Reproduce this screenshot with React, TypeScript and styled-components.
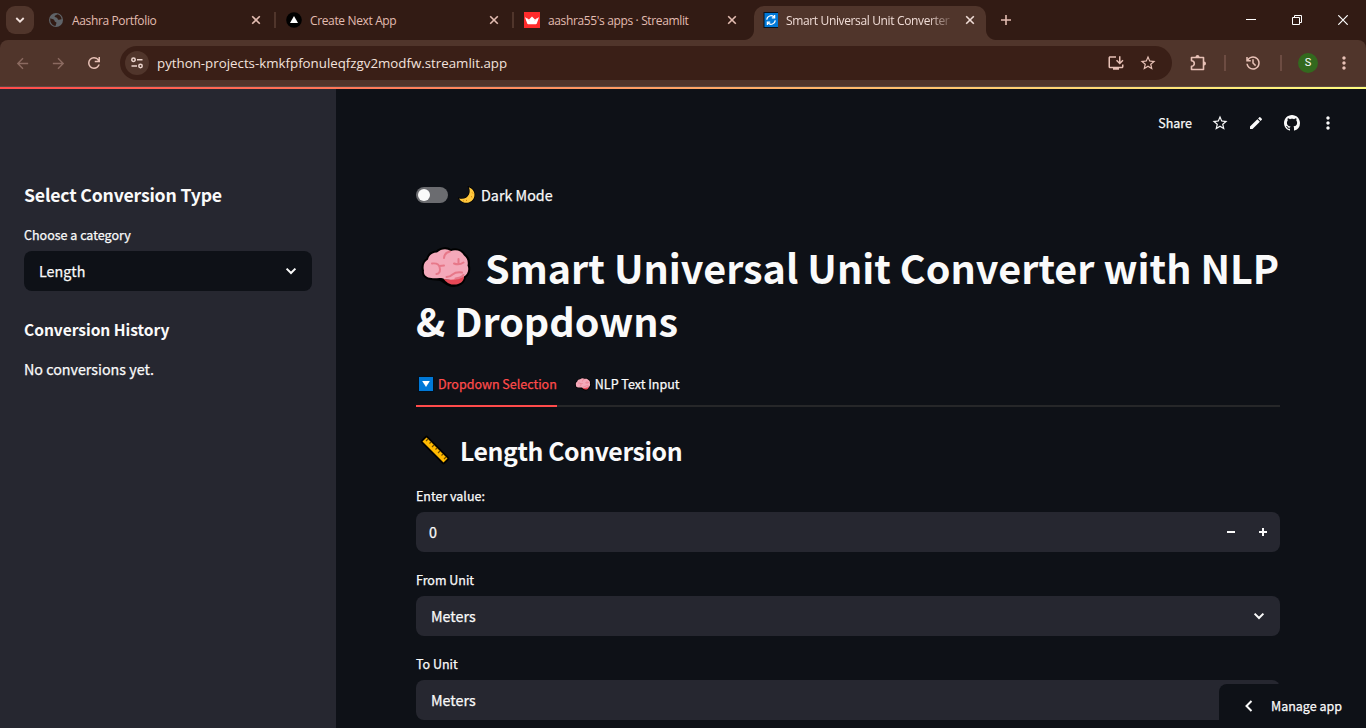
import React from "react";
import styled, { createGlobalStyle } from "styled-components";
import {
  MdArrowBack,
  MdArrowForward,
  MdStarOutline,
  MdEdit,
  MdMoreVert,
  MdOutlineInstallDesktop,
} from "react-icons/md";

const sans = `"Noto Sans CJK SC", "Noto Sans", sans-serif`;
const chromeFont = `"Open Sans", "Noto Sans", sans-serif`;

const GlobalStyle = createGlobalStyle`
  * { box-sizing: border-box; }
  html, body { margin: 0; padding: 0; background: #0e1117; overflow: hidden; }
  svg { display: block; flex: none; }
  h1, h2, h3, p { margin: 0; }
`;

const Window = styled.div`
  position: relative;
  width: 1366px;
  height: 728px;
  display: flex;
  flex-direction: column;
  overflow: hidden;
  background: #0e1117;
  white-space: nowrap;
`;

/* ---------- browser chrome ---------- */

const TabStrip = styled.div`
  height: 40px;
  flex: none;
  display: flex;
  align-items: center;
  background: #321b14;
  font-family: ${chromeFont};
`;

const TabSearch = styled.div`
  width: 28px;
  height: 28px;
  margin: 0 6px;
  border-radius: 9px;
  background: #50352b;
  display: flex;
  align-items: center;
  justify-content: center;
`;

const BrowserTab = styled.div<{ $active?: boolean }>`
  position: relative;
  width: 232px;
  height: 34px;
  margin-top: 6px;
  padding: 0 11px 6px 8px;
  display: flex;
  align-items: center;
  border-radius: 10px 10px 0 0;
  background: ${(p) => (p.$active ? "#50352b" : "transparent")};
  color: ${(p) => (p.$active ? "#f0dcd6" : "#e3bcb1")};
  ${(p) =>
    p.$active &&
    `
    &::before, &::after {
      content: "";
      position: absolute;
      bottom: 0;
      width: 10px;
      height: 10px;
    }
    &::before { left: -10px; background: radial-gradient(circle at 0 0, transparent 9.5px, #50352b 10.5px); }
    &::after { right: -10px; background: radial-gradient(circle at 100% 0, transparent 9.5px, #50352b 10.5px); }
  `}
`;

const TabTitle = styled.span<{ $fade?: boolean }>`
  width: 172px;
  margin-left: 8px;
  margin-right: auto;
  padding-top: 2px;
  font-size: 12px;
  line-height: 20px;
  letter-spacing: -0.36px;
  ${(p) => p.$fade && `mask-image: linear-gradient(90deg, #000 142px, transparent 170px);`}
`;

const TabDivider = styled.div<{ $hidden?: boolean }>`
  width: 2px;
  height: 16px;
  margin: 0 2px;
  background: ${(p) => (p.$hidden ? "transparent" : "#50352b")};
`;

const NewTab = styled.div`
  width: 40px;
  display: flex;
  justify-content: center;
`;

const WindowButtons = styled.div`
  margin-left: auto;
  display: flex;
`;

const WindowButton = styled.div`
  width: 46px;
  height: 40px;
  display: flex;
  align-items: center;
  justify-content: center;
`;

const ToolbarBack = styled.div`
  flex: none;
  background: #321b14;
`;

const Toolbar = styled.div`
  height: 47px;
  display: flex;
  align-items: center;
  padding-left: 4px;
  background: #50352b;
  border-radius: 8px 8px 0 0;
  border-bottom: 1px solid #5a4842;
  color: #e3bcb1;
`;

const NavButton = styled.div<{ $dim?: boolean; $width?: number }>`
  width: ${(p) => p.$width ?? 36}px;
  flex: none;
  display: flex;
  justify-content: center;
  color: ${(p) => (p.$dim ? "#8b6a60" : "#e8c1b6")};
`;

const AddressBar = styled.div`
  width: 1052px;
  flex: none;
  height: 34px;
  margin-left: 8px;
  padding: 0 8px 0 5px;
  display: flex;
  align-items: center;
  border-radius: 17px;
  background: #3a1f17;
`;

const SiteInfo = styled.div`
  width: 24px;
  height: 24px;
  border-radius: 50%;
  background: #50352b;
  display: flex;
  align-items: center;
  justify-content: center;
`;

const Url = styled.span`
  margin-left: 8px;
  margin-right: auto;
  font-family: ${chromeFont};
  font-size: 13.3px;
  line-height: 20px;
  color: #f3e2dd;
`;

const ToolbarDivider = styled.div`
  width: 2px;
  height: 16px;
  background: #6d4c42;
`;

const Avatar = styled.div`
  width: 20px;
  height: 20px;
  border-radius: 50%;
  background: #33691e;
  color: #fff;
  font: 11px/20px Roboto, sans-serif;
  text-align: center;
`;

/* ---------- page ---------- */

const Decoration = styled.div`
  height: 2px;
  flex: none;
  background: linear-gradient(90deg, #ff4b4b, #fffd80);
`;

const Page = styled.div`
  flex: 1;
  min-height: 0;
  display: flex;
  font-family: ${sans};
  color: #fafafa;
`;

const Sidebar = styled.aside`
  width: 336px;
  padding: 93px 24px 0;
  background: #262730;
`;

const Text = styled.div<{ $size: number; $line: number; $weight?: number; $spacing?: number }>`
  font-size: ${(p) => p.$size}px;
  line-height: ${(p) => p.$line}px;
  font-weight: ${(p) => p.$weight ?? 400};
  letter-spacing: ${(p) => p.$spacing ?? 0}px;
  -webkit-text-stroke: ${(p) => (p.$weight ? 0 : 0.25)}px currentColor;
`;

const SelectBox = styled.div<{ $dark?: boolean }>`
  height: 40px;
  padding: 0 15px;
  display: flex;
  align-items: center;
  justify-content: space-between;
  border-radius: 8px;
  background: ${(p) => (p.$dark ? "#0e1117" : "#262730")};
`;

const Field = styled.div`
  display: flex;
  flex-direction: column;
  gap: 4px;
  margin-bottom: 16px;
`;

const SidebarField = styled(Field)`
  margin-top: 17px;
  margin-bottom: 26px;
`;

const HistoryNote = styled(Text)`
  padding-top: 16px;
`;

const Main = styled.main`
  flex: 1;
  display: flex;
  flex-direction: column;
`;

const ActionBar = styled.div`
  height: 68px;
  flex: none;
  padding-right: 20px;
  display: flex;
  align-items: center;
  justify-content: flex-end;
`;

const Action = styled.div`
  width: 36px;
  display: flex;
  justify-content: center;
`;

const Share = styled(Text)`
  margin-right: 10px;
`;

const Content = styled.div`
  width: 864px;
  margin-left: 80px;
  padding-top: 26px;
`;

const ToggleRow = styled.div`
  height: 24px;
  display: flex;
  align-items: center;
`;

const Track = styled.div`
  width: 32px;
  height: 16px;
  margin-right: 9px;
  padding: 2px;
  border-radius: 8px;
  background: #6b6c70;
`;

const Knob = styled.div`
  width: 12px;
  height: 12px;
  border-radius: 50%;
  background: #fafafa;
`;

const Title = styled.h1`
  margin-top: 33px;
  font-size: 39.5px;
  line-height: 53px;
  font-weight: 700;
`;

const TitleLine = styled.div`
  display: flex;
  align-items: center;
  height: 53px;
`;

const TabList = styled.div`
  height: 40px;
  margin-top: 21px;
  display: flex;
  gap: 16px;
  border-bottom: 2px solid #262729;
`;

const ContentTab = styled.div<{ $active?: boolean }>`
  height: 40px;
  padding-bottom: 4px;
  display: flex;
  align-items: center;
  color: ${(p) => (p.$active ? "#ff4b4b" : "#fafafa")};
  border-bottom: 2px solid ${(p) => (p.$active ? "#ff4b4b" : "transparent")};
`;

const SectionHeading = styled.h2`
  height: 34px;
  margin: 26px 0 17px;
  display: flex;
  align-items: center;
`;

const Stepper = styled.div`
  display: flex;
`;

const StepButton = styled.div`
  width: 32px;
  display: flex;
  justify-content: center;
`;

const NumberBox = styled(SelectBox)`
  padding: 0 1px 0 13px;
`;

const ManageApp = styled.div`
  position: absolute;
  right: 0;
  bottom: 0;
  width: 147px;
  height: 44px;
  padding-left: 24px;
  padding-bottom: 1px;
  display: flex;
  align-items: center;
  border-top-left-radius: 8px;
  background: #0e1117;
  color: #fafafa;
  font-family: ${sans};
`;

const IconGap = styled.span<{ $l?: number; $r?: number }>`
  display: block;
  flex: none;
  margin-left: ${(p) => p.$l ?? 0}px;
  margin-right: ${(p) => p.$r ?? 0}px;
`;

/* ---------- drawings ---------- */

const CloseIcon = () => (
  <svg width="10" height="10" viewBox="0 0 10 10" stroke="currentColor" strokeWidth="1.6" fill="none">
    <path d="M1.2 1.2 8.8 8.8M8.8 1.2 1.2 8.8" />
  </svg>
);

const Chevron = () => (
  <svg width="12" height="12" viewBox="0 0 12 12" fill="none" stroke="#fafafa" strokeWidth="2">
    <path d="M1.6 3.6 6 8l4.4-4.4" />
  </svg>
);

const ReloadIcon = () => (
  <svg width="18" height="18" viewBox="0 -960 960 960" fill="currentColor">
    <path d="M480-160q-134 0-227-93t-93-227q0-134 93-227t227-93q69 0 132 28.500T720-690v-110h80v280H520v-80h168q-32-56-87.500-88T480-720q-100 0-170 70t-70 170q0 100 70 170t170 70q77 0 139-44t87-116h84q-28 106-114 173t-196 67Z" />
  </svg>
);

const HistoryIcon = () => (
  <svg width="18" height="18" viewBox="0 -960 960 960" fill="currentColor">
    <path d="M480-120q-138 0-240.500-91.500T122-440h82q14 104 92.500 172T480-200q117 0 198.500-81.500T760-480q0-117-81.500-198.500T480-760q-69 0-129 32t-101 88h110v80H120v-240h80v94q51-64 124.500-99T480-840q75 0 140.500 28.500t114 77q48.500 48.500 77 114T840-480q0 75-28.500 140.500t-77 114q-48.500 48.500-114 77T480-120Zm112-192L440-464v-216h80v184l128 128-56 56Z" />
  </svg>
);

const PuzzleIcon = () => (
  <svg width="18" height="18" viewBox="0 0 18 18" fill="none" stroke="currentColor" strokeWidth="1.600" strokeLinejoin="round">
    <path d="M2.500 3.500h12v12h-12v-3.200a2.800 2.800 0 0 0 0-5.600Z" />
    <path d="M6.500 3a2 2 0 0 1 4 0ZM15 7.500a2 2 0 0 1 0 4Z" fill="currentColor" stroke="none" />
  </svg>
);

const GlobeIcon = () => (
  <svg width="16" height="16" viewBox="0 0 16 16">
    <circle cx="8" cy="8" r="7" fill="#5f6368" />
    <path
      d="M2.400 6.300c1.600 1 2.600.4 3.600 1.500.9 1 .2 1.800 1.500 2.200 1 .3 1.300 1 .6 1.900l-.6 2.100C4.400 13.800 1.500 10.500 2.400 6.300ZM9 2.200c-.3 1.200-2.400 1-2.400 2.300 0 1.100 1.700.7 2.500 1.400.7.700.6 1.800 1.700 1.900 1.200.1 1.700-.6 2.700-.4.300-2.400-2-5.100-4.500-5.200Z"
      fill="#321b14"
    />
  </svg>
);

const NextIcon = () => (
  <svg width="16" height="16" viewBox="0 0 16 16">
    <circle cx="8" cy="8" r="7.800" fill="#000" />
    <path d="M8 4 12 11H4Z" fill="#fff" />
  </svg>
);

const CrownIcon = () => (
  <svg width="16" height="16" viewBox="0 0 16 16">
    <path d="M0 0h16v16H0Z" fill="#ff2b2b" />
    <path d="M1 5.300 5 7.400 8 4.600l3 2.800 4-2.100-2.200 6.200q-.3.700-1 .7H4.200q-.7 0-1-.7Z" fill="#fff" />
    <path d="M1 5.300 5 7.400 6.300 9.500ZM15 5.300l-4 2.100L9.700 9.500Z" fill="#ffc4c4" />
  </svg>
);

const SyncIcon = () => (
  <svg width="16" height="16" viewBox="0 0 16 16">
    <path d="M1.500 0H16v16H1.500Z" fill="#061320" />
    <path d="M2.500 1H16v14H2.500Z" fill="#0078d7" />
    <g fill="none" stroke="#fff" strokeWidth="1.300">
      <path d="M4.700 7.600A4.300 4.300 0 0 1 12 5M13.300 8.400A4.300 4.300 0 0 1 6 11" />
      <path d="M12.600 3v2.800H9.800M5.400 13v-2.800h2.800" />
    </g>
  </svg>
);

const TuneIcon = () => (
  <svg width="14" height="14" viewBox="0 0 14 14" fill="none" stroke="#ecd5ce" strokeWidth="1.500">
    <circle cx="3.500" cy="3.700" r="1.700" />
    <circle cx="10.500" cy="10" r="1.700" />
    <path d="M7 3.700h5.500M1.500 10H7" />
  </svg>
);

const GithubIcon = () => (
  <svg width="16" height="16" viewBox="0 0 16 16" fill="#fafafa">
    <path d="M8 0C3.580 0 0 3.580 0 8c0 3.540 2.290 6.530 5.470 7.590.4.070.55-.17.55-.38 0-.19-.01-.82-.01-1.490-2.010.37-2.530-.49-2.690-.94-.09-.23-.48-.94-.82-1.130-.28-.15-.68-.52-.01-.53.63-.01 1.080.58 1.230.82.72 1.210 1.870.87 2.330.66.07-.52.28-.87.51-1.070-1.780-.2-3.640-.89-3.640-3.950 0-.87.31-1.590.82-2.150-.08-.2-.36-1.020.08-2.120 0 0 .67-.21 2.200.82.64-.18 1.320-.27 2-.27s1.360.09 2 .27c1.530-1.040 2.200-.82 2.200-.82.44 1.100.16 1.920.08 2.120.51.56.82 1.270.82 2.150 0 3.070-1.870 3.750-3.650 3.950.29.25.54.73.54 1.480 0 1.070-.01 1.930-.01 2.200 0 .21.15.46.55.38A8.010 8.010 0 0 0 16 8c0-4.420-3.580-8-8-8Z" />
  </svg>
);

const MoonIcon = () => (
  <svg width="18" height="18" viewBox="0 0 18 18">
    <path
      d="M10.800 1.200C15 2.600 17.300 6.400 16.300 10.500 15 15.700 9.700 18 5.200 16.200 3.400 15.500 1.900 14.100 1.100 12.500 5.500 13.600 9.300 12 10.900 8.600 12 6.200 11.900 3.600 10.800 1.200Z"
      fill="#ffc83d"
      stroke="#000"
      strokeWidth="1.400"
      paintOrder="stroke"
    />
    <path d="M14.200 6.500l.8 1M13 10.500l1.200.6M8 14l1 .8M5 14.600l.8.4" stroke="#d67d00" strokeWidth="1" />
  </svg>
);

const BrainIcon = ({ width, height }: { width: number; height: number }) => (
  <svg width={width} height={height} viewBox="0 0 50 42">
    <path
      d="M10.500 32C5 32 2.200 28.500 3 24.500 1.800 20.500 3 15.500 7 13.500 8 9 12 6.200 16 6.500 20 2.500 26.500 2 29.500 5.300 35 3 40.500 5 43 9.500 46 11.500 47.500 15.500 46.500 19.500 48.500 23.500 46.500 28.500 43 30.500 42.500 36 37.500 39.500 32 39 27.500 39.500 25 36 21.500 34 18.500 31.500 14.500 33 10.500 32Z"
      fill="#000"
      stroke="#000"
      strokeWidth="4"
    />
    <path
      d="M10.500 32C5 32 2.200 28.500 3 24.500 1.800 20.500 3 15.500 7 13.500 8 9 12 6.200 16 6.500 20 2.500 26.500 2 29.500 5.300 35 3 40.500 5 43 9.500 46 11.500 47.500 15.500 46.500 19.500 48.500 23.500 46.500 28.500 43 30.500 42.500 34 40 35 36 34.500L24 33.500C20 30.500 15 33 10.500 32Z"
      fill="#f4a9ba"
    />
    <path d="M22.500 33C30 34.500 37 33.500 43 30.500 43 36 38 39 32 38.500 28 38.500 25.500 36 22.500 33Z" fill="#e74856" />
    <g fill="none" stroke="#e77889" strokeWidth="2" strokeLinecap="round">
      <path d="M11 17.500Q19 16.500 19 23.500 19 27.500 15.500 28M18.500 20 23 19.500" />
      <path d="M29 5.500Q23.500 6.500 23 12M33 17.500Q38 19.500 42.500 16.500M37.500 18V13" />
      <path d="M25.500 31Q29 31 31.500 28.500 35 25.500 41 26.500M34.500 32.500Q40 32 42.500 29" />
    </g>
  </svg>
);

const DownButtonIcon = () => (
  <svg width="16" height="16" viewBox="0 0 16 16">
    <path d="M0 0h16v16H0Z" fill="#03101c" />
    <path d="M1 1h14v14H1Z" fill="#0078d7" />
    <path d="M4.200 5h7.600L8 11Z" fill="#fff" />
  </svg>
);

const RulerIcon = () => (
  <svg width="30" height="30" viewBox="0 0 30 30">
    <path d="M6.500 2.500 27.500 23.500 23.500 27.500 2.500 6.500Z" fill="#ffb900" stroke="#000" strokeWidth="3.600" strokeLinejoin="round" paintOrder="stroke" />
    <path d="M8 4l-2 2M11 7 9.500 8.500M14 10l-2 2M17 13l-1.500 1.500M20 16l-2 2M23 19l-1.500 1.500M26 22l-2 2" stroke="#6b4a00" strokeWidth="1.100" />
  </svg>
);

const tabs = [
  { title: "Aashra Portfolio", icon: <GlobeIcon /> },
  { title: "Create Next App", icon: <NextIcon /> },
  { title: "aashra55's apps · Streamlit", icon: <CrownIcon /> },
  { title: "Smart Universal Unit Converter", icon: <SyncIcon />, active: true },
];

export default function App() {
  return (
    <Window>
      <GlobalStyle />
      <TabStrip>
        <TabSearch>
          <svg width="10" height="10" viewBox="0 0 10 10" fill="none" stroke="#f3e2dd" strokeWidth="1.800">
            <path d="M1.300 3 5 6.700 8.700 3" />
          </svg>
        </TabSearch>
        {tabs.map((t, i) => (
          <React.Fragment key={t.title}>
            <BrowserTab $active={t.active}>
              {t.icon}
              <TabTitle $fade={t.active}>{t.title}</TabTitle>
              <CloseIcon />
            </BrowserTab>
            {i < 3 && <TabDivider $hidden={i === 2} />}
          </React.Fragment>
        ))}
        <NewTab>
          <svg width="12" height="12" viewBox="0 0 12 12" stroke="#e3bcb1" strokeWidth="1.600">
            <path d="M6 1v10M1 6h10" />
          </svg>
        </NewTab>
        <WindowButtons>
          <WindowButton>
            <svg width="10" height="10" viewBox="0 0 10 10" stroke="#fff">
              <path d="M0 4.500h10" />
            </svg>
          </WindowButton>
          <WindowButton>
            <svg width="10" height="10" viewBox="0 0 10 10" stroke="#fff" fill="none">
              <path d="M.5 2.500h7v7h-7ZM2.500 2.500v-2h7v7h-2" />
            </svg>
          </WindowButton>
          <WindowButton>
            <svg width="10" height="10" viewBox="0 0 10 10" stroke="#fff" strokeWidth="1.200">
              <path d="M.3.300l9.400 9.400M9.700.300l-9.400 9.400" />
            </svg>
          </WindowButton>
        </WindowButtons>
      </TabStrip>

      <ToolbarBack>
        <Toolbar>
          <NavButton $dim>
            <MdArrowBack size={17} />
          </NavButton>
          <NavButton $dim>
            <MdArrowForward size={17} />
          </NavButton>
          <NavButton>
            <ReloadIcon />
          </NavButton>
          <AddressBar>
            <SiteInfo>
              <TuneIcon />
            </SiteInfo>
            <Url>python-projects-kmkfpfonuleqfzgv2modfw.streamlit.app</Url>
            <NavButton $width={32}>
              <MdOutlineInstallDesktop size={18} />
            </NavButton>
            <NavButton $width={32}>
              <MdStarOutline size={18} />
            </NavButton>
          </AddressBar>
          <NavButton $width={52}>
            <PuzzleIcon />
          </NavButton>
          <ToolbarDivider />
          <NavButton $width={54}>
            <HistoryIcon />
          </NavButton>
          <ToolbarDivider />
          <NavButton $width={52}>
            <Avatar>S</Avatar>
          </NavButton>
          <NavButton $width={20}>
            <MdMoreVert size={20} />
          </NavButton>
        </Toolbar>
      </ToolbarBack>

      <Decoration />
      <Page>
        <Sidebar>
          <Text as="h2" $size={17.7} $line={24} $weight={700} $spacing={-0.21}>
            Select Conversion Type
          </Text>
          <SidebarField>
            <Text $size={12.5} $line={24}>
              Choose a category
            </Text>
            <SelectBox $dark>
              <Text $size={14.3} $line={24}>
                Length
              </Text>
              <Chevron />
            </SelectBox>
          </SidebarField>
          <Text as="h3" $size={15.6} $line={24} $weight={700} $spacing={-0.05}>
            Conversion History
          </Text>
          <HistoryNote as="p" $size={14.3} $line={24}>
            No conversions yet.
          </HistoryNote>
        </Sidebar>

        <Main>
          <ActionBar>
            <Share $size={12.5} $line={24}>
              Share
            </Share>
            <Action>
              <MdStarOutline size={18} />
            </Action>
            <Action>
              <MdEdit size={16} />
            </Action>
            <Action>
              <GithubIcon />
            </Action>
            <Action>
              <MdMoreVert size={20} />
            </Action>
          </ActionBar>

          <Content>
            <ToggleRow>
              <Track>
                <Knob />
              </Track>
              <IconGap $l={1} $r={5}>
                <MoonIcon />
              </IconGap>
              <Text $size={14.3} $line={24}>
                Dark Mode
              </Text>
            </ToggleRow>

            <Title>
              <TitleLine>
                <IconGap $l={5} $r={14}>
                  <BrainIcon width={50} height={42} />
                </IconGap>
                Smart Universal Unit Converter with NLP
              </TitleLine>
              <TitleLine>&amp; Dropdowns</TitleLine>
            </Title>

            <TabList>
              <ContentTab $active>
                <IconGap $l={2} $r={4}>
                  <DownButtonIcon />
                </IconGap>
                <Text $size={12.5} $line={24}>
                  Dropdown Selection
                </Text>
              </ContentTab>
              <ContentTab>
                <IconGap $l={2} $r={4}>
                  <BrainIcon width={16} height={14} />
                </IconGap>
                <Text $size={12.5} $line={24}>
                  NLP Text Input
                </Text>
              </ContentTab>
            </TabList>

            <SectionHeading>
              <IconGap $l={4} $r={10}>
                <RulerIcon />
              </IconGap>
              <Text as="span" $size={24.800} $line={34} $weight={700} $spacing={-0.4}>
                Length Conversion
              </Text>
            </SectionHeading>

            <Field>
              <Text $size={12.5} $line={24}>
                Enter value:
              </Text>
              <NumberBox>
                <Text $size={14.3} $line={24}>
                  0
                </Text>
                <Stepper>
                  <StepButton>
                    <svg width="8" height="8" viewBox="0 0 8 8" stroke="#fafafa" strokeWidth="2">
                      <path d="M0 4h8" />
                    </svg>
                  </StepButton>
                  <StepButton>
                    <svg width="8" height="8" viewBox="0 0 8 8" stroke="#fafafa" strokeWidth="2">
                      <path d="M0 4h8M4 0v8" />
                    </svg>
                  </StepButton>
                </Stepper>
              </NumberBox>
            </Field>

            {["From Unit", "To Unit"].map((label) => (
              <Field key={label}>
                <Text $size={12.5} $line={24}>
                  {label}
                </Text>
                <SelectBox>
                  <Text $size={14.3} $line={24}>
                    Meters
                  </Text>
                  <Chevron />
                </SelectBox>
              </Field>
            ))}
          </Content>
        </Main>
      </Page>

      <ManageApp>
        <IconGap $r={16}>
          <svg width="12" height="12" viewBox="0 0 12 12" fill="none" stroke="#fafafa" strokeWidth="2">
            <path d="M8.500 1 3.500 6l5 5" />
          </svg>
        </IconGap>
        <Text $size={12.5} $line={24}>
          Manage app
        </Text>
      </ManageApp>
    </Window>
  );
}
